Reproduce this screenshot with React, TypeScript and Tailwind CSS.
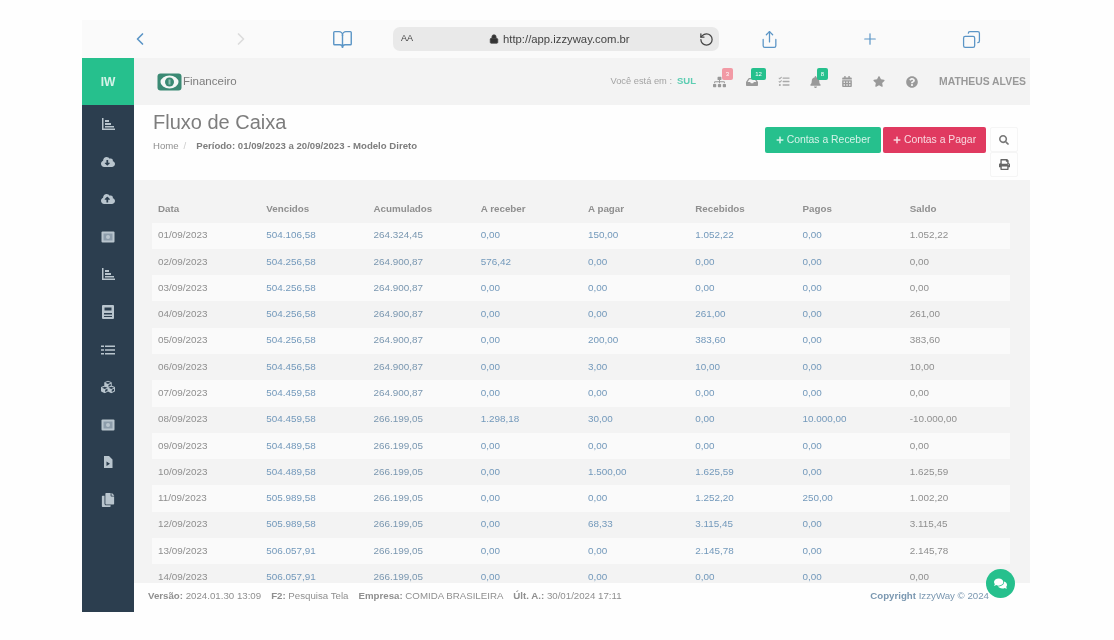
import React from "react";
import { ChevronLeft, ChevronRight, BookOpen, Share, Plus, Copy, RotateCw, Lock } from "lucide-react";
import {
  FaCloudDownloadAlt, FaCloudUploadAlt, FaCubes,
  FaCopy, FaSitemap, FaInbox, FaTasks, FaBell, FaCalendarAlt, FaStar,
  FaQuestionCircle, FaSearch, FaPrint, FaComments, FaPlus,
} from "react-icons/fa";

const rows: string[][] = [
  ["01/09/2023", "504.106,58", "264.324,45", "0,00", "150,00", "1.052,22", "0,00", "1.052,22"],
  ["02/09/2023", "504.256,58", "264.900,87", "576,42", "0,00", "0,00", "0,00", "0,00"],
  ["03/09/2023", "504.256,58", "264.900,87", "0,00", "0,00", "0,00", "0,00", "0,00"],
  ["04/09/2023", "504.256,58", "264.900,87", "0,00", "0,00", "261,00", "0,00", "261,00"],
  ["05/09/2023", "504.256,58", "264.900,87", "0,00", "200,00", "383,60", "0,00", "383,60"],
  ["06/09/2023", "504.456,58", "264.900,87", "0,00", "3,00", "10,00", "0,00", "10,00"],
  ["07/09/2023", "504.459,58", "264.900,87", "0,00", "0,00", "0,00", "0,00", "0,00"],
  ["08/09/2023", "504.459,58", "266.199,05", "1.298,18", "30,00", "0,00", "10.000,00", "-10.000,00"],
  ["09/09/2023", "504.489,58", "266.199,05", "0,00", "0,00", "0,00", "0,00", "0,00"],
  ["10/09/2023", "504.489,58", "266.199,05", "0,00", "1.500,00", "1.625,59", "0,00", "1.625,59"],
  ["11/09/2023", "505.989,58", "266.199,05", "0,00", "0,00", "1.252,20", "250,00", "1.002,20"],
  ["12/09/2023", "505.989,58", "266.199,05", "0,00", "68,33", "3.115,45", "0,00", "3.115,45"],
  ["13/09/2023", "506.057,91", "266.199,05", "0,00", "0,00", "2.145,78", "0,00", "2.145,78"],
  ["14/09/2023", "506.057,91", "266.199,05", "0,00", "0,00", "0,00", "0,00", "0,00"],
];
const heads = ["Data", "Vencidos", "Acumulados", "A receber", "A pagar", "Recebidos", "Pagos", "Saldo"];

type IconProps = { className?: string };

function FilePlay({ className }: IconProps) {
  return (
    <svg viewBox="0 0 14 14" className={className} fill="currentColor">
      <path fillRule="evenodd" d="M3 1h5l3.5 3.5V13H3V1zM5.5 6.5v4.5L9 8.75 5.5 6.5z" />
    </svg>
  );
}
function ChartSteps({ className }: IconProps) {
  return (
    <svg viewBox="0 0 14 14" className={className} fill="currentColor">
      <path d="M1 1h1.5v10.5H14V13H1V1z" />
      <path d="M4 3h4v2H4zM4 6h6v2H4zM4 9h9v1.5H4z" />
    </svg>
  );
}
function MoneyBox({ className }: IconProps) {
  return (
    <svg viewBox="0 0 14 14" className={className}>
      <rect x="0.5" y="1.5" width="13" height="11" rx="1" fill="currentColor" />
      <rect x="2.5" y="3.5" width="9" height="7" fill="#8d9dab" />
      <circle cx="7" cy="7" r="2" fill="currentColor" />
    </svg>
  );
}
function CalcBox({ className }: IconProps) {
  return (
    <svg viewBox="0 0 14 14" className={className} fill="currentColor">
      <path fillRule="evenodd" d="M2 0h10a1 1 0 0 1 1 1v12a1 1 0 0 1-1 1H2a1 1 0 0 1-1-1V1a1 1 0 0 1 1-1zM3.5 2.5v3h7v-3h-7zM3 8v1.5h8V8H3zM3 11v1h8v-1H3z" />
    </svg>
  );
}
function Rows({ className }: IconProps) {
  return (
    <svg viewBox="0 0 14 14" className={className} fill="currentColor">
      <path d="M0 2.5h3v1.6H0zM4 2.5h10v1.6H4zM0 6.2h3v1.6H0zM4 6.2h10v1.6H4zM0 9.9h3v1.6H0zM4 9.9h10v1.6H4z" />
    </svg>
  );
}

const sideIcons = [ChartSteps, FaCloudDownloadAlt, FaCloudUploadAlt, MoneyBox, ChartSteps, CalcBox, Rows, FaCubes, MoneyBox, FilePlay, FaCopy];

function cellColor(i: number) {
  if (i === 0 || i === 7) return "text-[#8f8f8f]";
  if (i === 2) return "text-[#7a97b0]";
  return "text-[#7399bb]";
}

export default function App() {
  return (
    <div className="relative h-[640px] w-[1114px] overflow-hidden bg-[#fefefe] pl-[82px] pt-[20px] font-['Liberation_Sans',sans-serif] blur-[0.6px]">
      <div className="relative flex h-[592px] w-[948px] flex-col">
        {/* Browser toolbar */}
        <div className="relative flex h-[38px] items-center bg-[#fafafa]">
          <ChevronLeft className="ml-[48px] h-[20px] w-[20px] text-[#5b95c6]" strokeWidth={2} />
          <ChevronRight className="ml-[81px] h-[20px] w-[20px] text-[#dcdcdc]" strokeWidth={2} />
          <BookOpen className="ml-[81px] h-[21px] w-[21px] text-[#5b95c6]" strokeWidth={1.6} />
          <div className="ml-[40px] flex h-[24px] w-[326px] items-center rounded-[7px] bg-[#e9e9e9] pl-[8px] pr-[5px] text-[#444]">
            <span className="text-[9px]">AA</span>
            <div className="ml-[76px] flex items-center gap-[4px]">
              <Lock className="h-[10px] w-[10px] fill-[#333]" />
              <span className="text-[11.3px]">http://app.izzyway.com.br</span>
            </div>
            <RotateCw className="ml-auto h-[15px] w-[15px] -scale-x-100 text-[#444]" strokeWidth={2} />
          </div>
          <Share className="ml-[41px] h-[19px] w-[19px] text-[#5b95c6]" strokeWidth={1.6} />
          <Plus className="ml-[82px] h-[18px] w-[18px] text-[#5b95c6]" strokeWidth={1.6} />
          <Copy className="ml-[83px] h-[19px] w-[19px] -scale-x-100 text-[#5b95c6]" strokeWidth={1.6} />
        </div>

        <div className="flex min-h-0 flex-1">
          {/* Sidebar */}
          <div className="flex w-[52px] shrink-0 flex-col bg-[#2c3e4f]">
            <div className="flex h-[47px] items-center justify-center bg-[#26c08d] text-[12px] font-bold text-white/80">IW</div>
            <div className="flex flex-col items-center gap-[23.6px] pt-[12px]">
              {sideIcons.map((Ic, i) => (
                <Ic key={i} className="h-[14px] w-[14px] text-[#b9c5ce]" />
              ))}
            </div>
          </div>

          {/* Main */}
          <div className="flex min-w-0 flex-1 flex-col">
            <div className="flex h-[47px] shrink-0 items-center bg-[#f3f3f3] pl-[23px] pr-[4px]">
              <svg viewBox="0 0 25 18" className="h-[18px] w-[25px]">
                <rect x="0.5" y="0.5" width="24" height="17" rx="3" fill="#3b8a74" />
                <ellipse cx="12.5" cy="9" rx="9" ry="6.5" fill="#f4f8f6" />
                <circle cx="12.5" cy="9" r="4.5" fill="#3b8a74" />
                <rect x="11.5" y="6.5" width="2" height="5" fill="#8fc4b2" />
              </svg>
              <span className="ml-px text-[11.5px] text-[#7d7d7d]">Financeiro</span>
              <span className="ml-auto text-[9.3px] text-[#a3a3a3]">Você está em :</span>
              <span className="ml-[5px] text-[9.5px] font-bold text-[#5ccdb2]">SUL</span>
              <div className="relative ml-[17px]">
                <FaSitemap className="h-[12px] w-[13px] text-[#999]" />
                <span className="absolute -right-[7px] -top-[8px] h-[12px] w-[11px] rounded-[2px] bg-[#f29aa5] text-center text-[6px] leading-[12px] text-white">3</span>
              </div>
              <div className="relative ml-[20px]">
                <FaInbox className="h-[12px] w-[12px] text-[#999]" />
                <span className="absolute -right-[8px] -top-[8px] h-[12px] w-[15px] rounded-[2px] bg-[#26c08d] text-center text-[6px] leading-[12px] text-white">12</span>
              </div>
              <FaTasks className="ml-[20px] h-[11px] w-[12px] text-[#aaa]" />
              <div className="relative ml-[20px]">
                <FaBell className="h-[12px] w-[11px] text-[#999]" />
                <span className="absolute -right-[7px] -top-[8px] h-[12px] w-[11px] rounded-[2px] bg-[#26c08d] text-center text-[6px] leading-[12px] text-white">8</span>
              </div>
              <FaCalendarAlt className="ml-[21px] h-[11px] w-[10px] text-[#999]" />
              <FaStar className="ml-[21px] h-[11px] w-[12px] text-[#999]" />
              <FaQuestionCircle className="ml-[21px] h-[12px] w-[12px] text-[#999]" />
              <span className="ml-[21px] text-[10.4px] font-bold text-[#999]">MATHEUS ALVES</span>
            </div>

            <div className="flex h-[75px] shrink-0 bg-[#fefefe] pl-[19px] pr-[12px]">
              <div className="pt-[5px]">
                <div className="text-[20px] leading-[24px] text-[#7d7d7d]">Fluxo de Caixa</div>
                <div className="mt-[6px] flex text-[9.6px] leading-[12px] text-[#8f8f8f]">
                  <span>Home</span>
                  <span className="ml-[5px] text-[#ccc]">/</span>
                  <span className="ml-[10px] font-bold text-[#7d7d7d]">Período: 01/09/2023 a 20/09/2023 - Modelo Direto</span>
                </div>
              </div>
              <div className="ml-auto flex pt-[22px]">
                <div className="flex h-[26px] w-[116px] items-center justify-center gap-[3px] rounded-[2px] bg-[#26c08d] text-[10.4px] text-white/80">
                  <FaPlus className="h-[8px] w-[8px]" />Contas a Receber
                </div>
                <div className="ml-[2px] flex h-[26px] w-[103px] items-center justify-center gap-[3px] rounded-[2px] bg-[#e03a60] text-[10.4px] text-white/80">
                  <FaPlus className="h-[8px] w-[8px]" />Contas a Pagar
                </div>
                <div className="ml-[4px] flex w-[28px] flex-col">
                  <div className="flex h-[25px] items-center justify-center rounded-[2px] border border-[#f5f5f5]">
                    <FaSearch className="h-[10px] w-[10px] text-[#777]" />
                  </div>
                  <div className="flex h-[25px] items-center justify-center rounded-[2px] border border-[#f5f5f5]">
                    <FaPrint className="h-[11px] w-[11px] text-[#666]" />
                  </div>
                </div>
              </div>
            </div>

            <div className="min-h-0 flex-1 overflow-hidden bg-[#f3f3f3] pl-[18px] pr-[20px] pt-[20px]">
              <table className="w-[858px] table-fixed border-collapse text-[9.9px]">
                <thead>
                  <tr className="h-[22.5px]">
                    {heads.map((h, i) => (
                      <th key={h} className={(i === 0 ? "pl-[6px]" : "pl-[7px]") + " pb-[4px] text-left text-[9.8px] font-bold text-[#8f8f8f]"}>{h}</th>
                    ))}
                  </tr>
                </thead>
                <tbody>
                  {rows.map((r, ri) => (
                    <tr key={ri} className={ri % 2 === 0 ? "h-[26.3px] bg-[#fafafa]" : "h-[26.3px] bg-[#f3f3f3]"}>
                      {r.map((v, i) => (
                        <td key={i} className={(i === 0 ? "pl-[6px] " : "pl-[7px] ") + cellColor(i)}>{v}</td>
                      ))}
                    </tr>
                  ))}
                </tbody>
              </table>
            </div>

            <div className="flex h-[29px] shrink-0 items-start bg-[#fefefe] pl-[14px] pr-[41px] pt-[7px] text-[9.7px] leading-[12px] text-[#8f8f8f]">
              <span><b>Versão:</b> 2024.01.30 13:09</span>
              <span className="ml-[10px]"><b>F2:</b> Pesquisa Tela</span>
              <span className="ml-[10px]"><b>Empresa:</b> COMIDA BRASILEIRA</span>
              <span className="ml-[10px]"><b>Últ. A.:</b> 30/01/2024 17:11</span>
              <span className="ml-auto text-[#7a97b0]"><b>Copyright</b> IzzyWay © 2024</span>
            </div>
          </div>
        </div>

        {/* Floating chat button */}
        <div className="absolute left-[904px] top-[549px] flex h-[29px] w-[29px] items-center justify-center rounded-full bg-[#26c08d]">
          <FaComments className="h-[13px] w-[13px] text-white" />
        </div>
      </div>
    </div>
  );
}
